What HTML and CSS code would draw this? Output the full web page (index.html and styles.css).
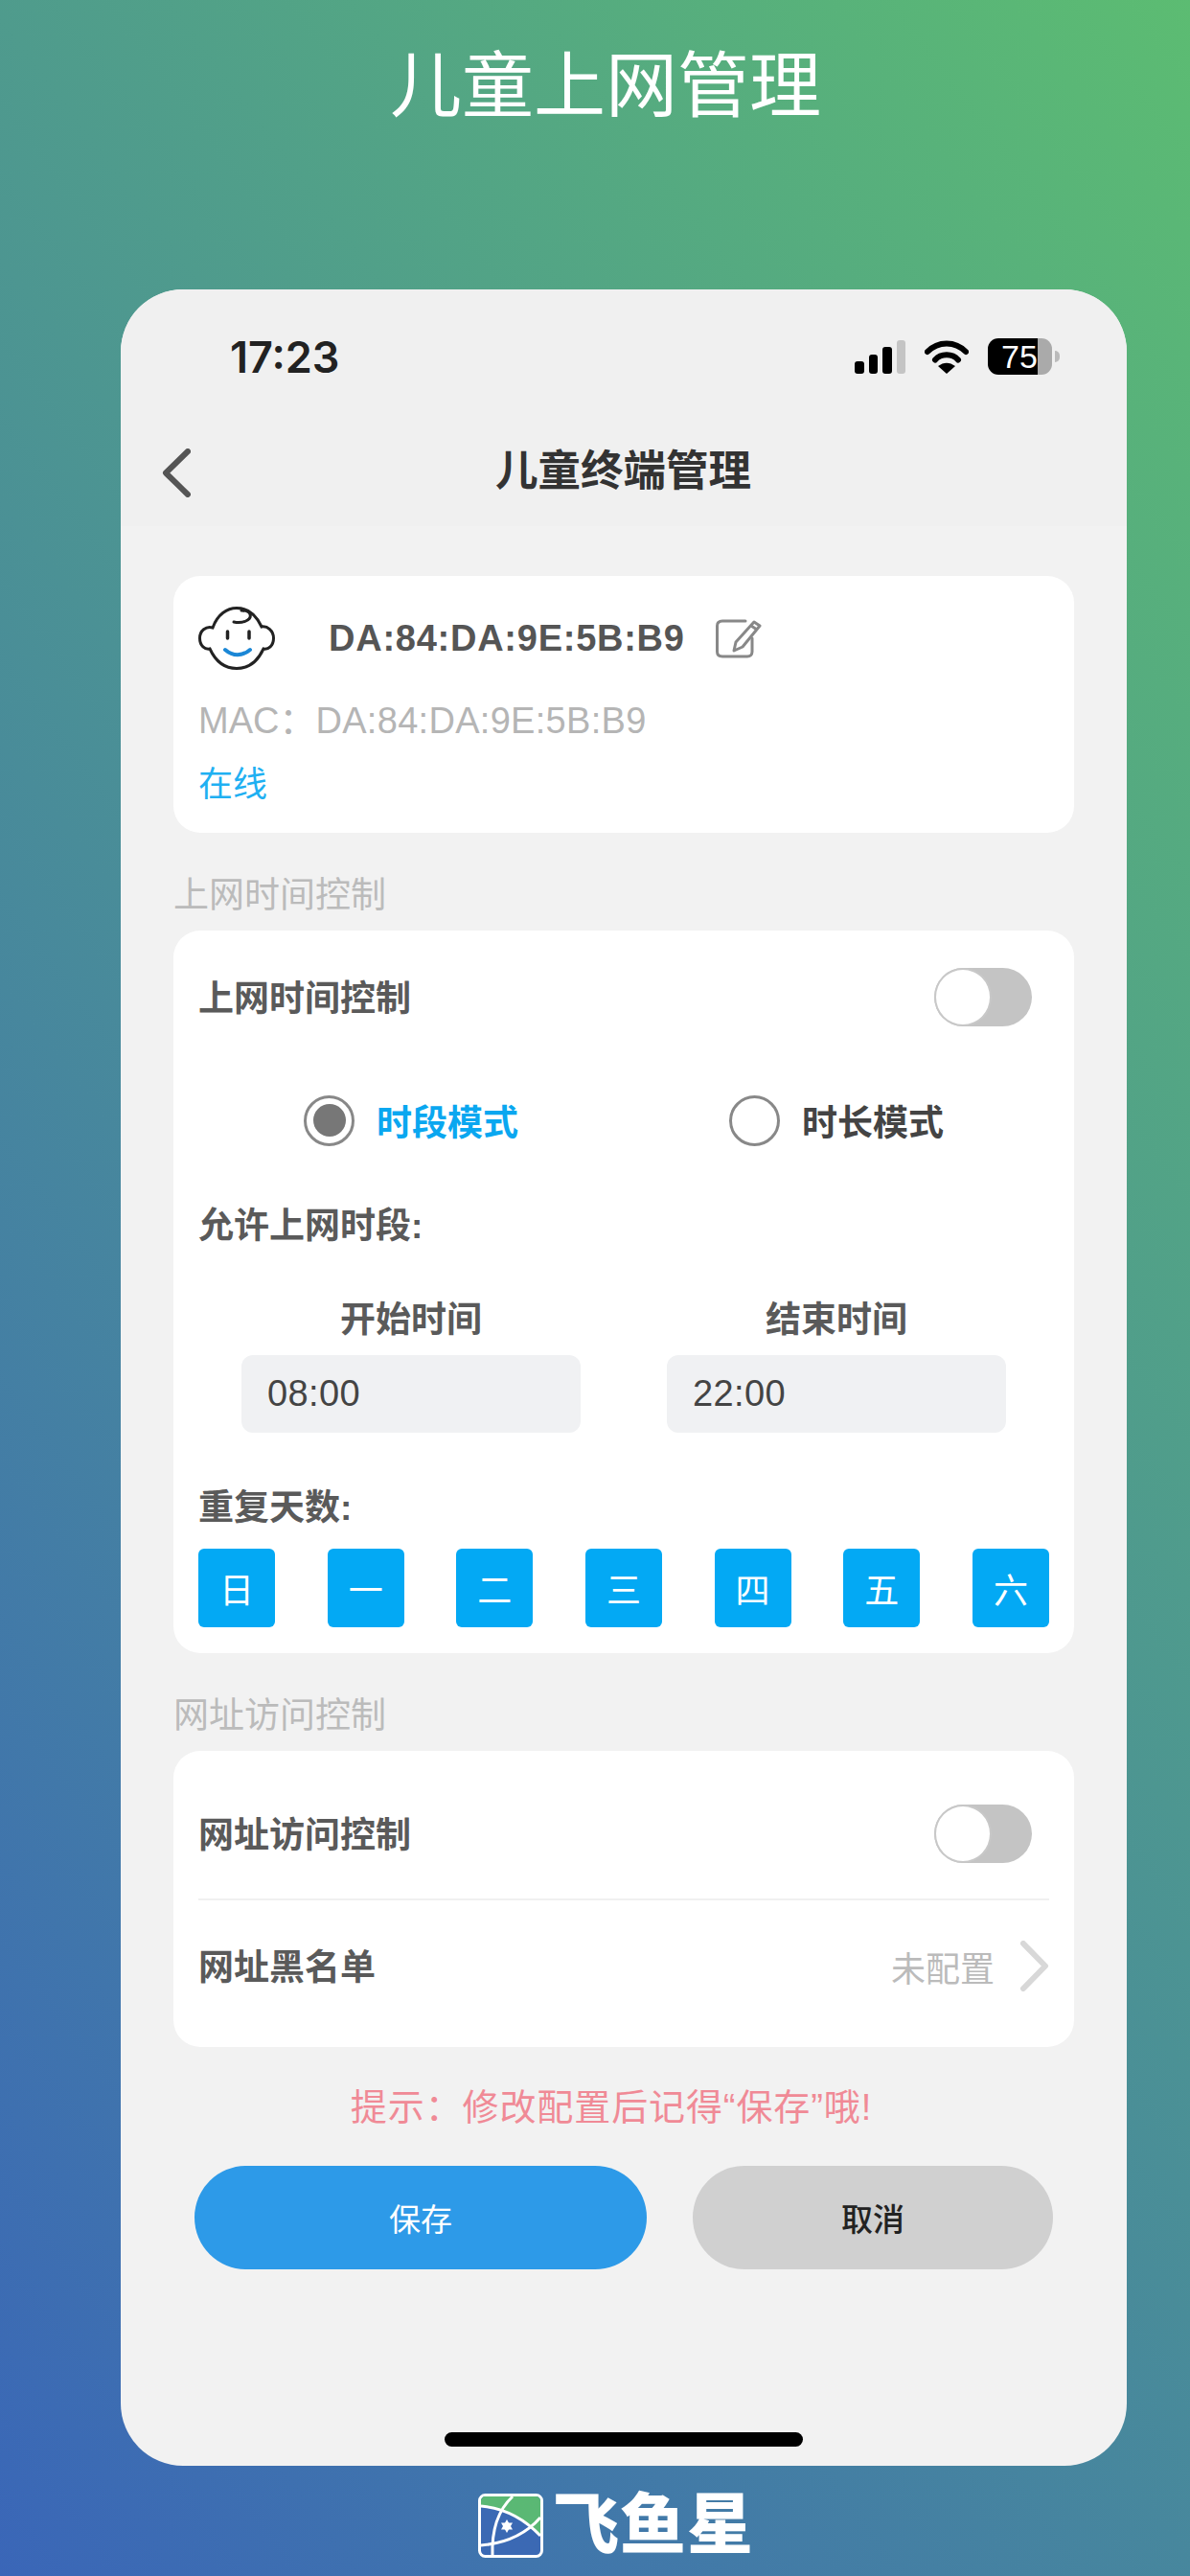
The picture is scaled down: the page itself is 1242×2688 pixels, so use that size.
FILE: index.html
```html
<!doctype html>
<html lang="zh-CN">
  <head>
    <meta charset="UTF-8" />
    <title>儿童上网管理</title>
    <link rel="stylesheet" href="styles.css">
  </head>

  <body>
    <h1 class="page-title">儿童上网管理</h1>

    <div class="phone">
      <div class="status-bar">
        <span class="clock">17:23</span>
        <div class="status-icons">
          <svg width="53" height="35" viewBox="0 0 53 35">
            <rect x="0" y="22" width="10" height="13" rx="3" fill="#000" />
            <rect x="15" y="15" width="9" height="20" rx="3" fill="#000" />
            <rect x="29" y="7" width="10" height="28" rx="3" fill="#000" />
            <rect x="44" y="0" width="9" height="35" rx="3" fill="#c4c4c4" />
          </svg>
          <svg width="46" height="35" viewBox="0 0 46 35">
            <path d="M3 12 C14 0.500 32 0.500 43 12" fill="none" stroke="#000" stroke-width="6" stroke-linecap="round" />
            <path d="M11 20.500 C17 13.500 29 13.500 35 20.500" fill="none" stroke="#000" stroke-width="6" stroke-linecap="round" />
            <path d="M14 27 C20 22.500 26 22.500 32 27 L23 35 Z" fill="#000" />
          </svg>
          <div class="battery-wrap">
            <div class="battery">75</div>
            <span class="battery-nub"></span>
          </div>
        </div>
      </div>

      <div class="nav">
        <svg class="back" width="30" height="51" viewBox="0 0 30 51">
          <path d="M27 3 L4 25.5 L27 48" fill="none" stroke="#555" stroke-width="6" stroke-linecap="round" stroke-linejoin="round" />
        </svg>
        <div class="nav-title">儿童终端管理</div>
      </div>

      <div class="content">
        <div class="card device-card">
          <div class="device-row">
            <svg width="80" height="66" viewBox="0 0 80 66">
              <path d="M15 22 C20 8 30 1.500 40 1.500 C52 1.500 60 8 66 21 C72 20 78.500 25 78.500 33 C78.500 41 73 45 68 44 C62 57 52 64.500 40 64.500 C28 64.500 18 57 12 44 C7 45 1.500 41 1.500 33 C1.500 25 8 20 15 22 Z" fill="none" stroke="#222" stroke-width="3" />
              <path d="M37 16 C46 18 56 14 54 8 C53 5 49 4 45 4" fill="none" stroke="#222" stroke-width="3" stroke-linecap="round" />
              <path d="M30.500 26 V33 M53 26 V33" fill="none" stroke="#222" stroke-width="3.500" stroke-linecap="round" />
              <path d="M28 45 C36 52 46 52 54 45" fill="none" stroke="#1b87d6" stroke-width="4" stroke-linecap="round" />
            </svg>
            <span class="device-name">DA:84:DA:9E:5B:B9</span>
            <svg class="edit" width="48" height="41" viewBox="0 0 48 41">
              <path d="M31 2 H7 C3.500 2 1.500 4 1.500 7 V34 C1.500 37 3.500 39 7 39 H33 C36 39 38 37 38 34 V20" fill="none" stroke="#888" stroke-width="3" stroke-linecap="round" />
              <path d="M40 3 L46 7 L28 29 L19 33 L21 24 Z" fill="none" stroke="#888" stroke-width="3" stroke-linejoin="round" />
              <path d="M37 7 L43 11" fill="none" stroke="#888" stroke-width="3" />
            </svg>
          </div>
          <div class="mac">MAC：<span class="mac-value">DA:84:DA:9E:5B:B9</span></div>
          <div class="online">在线</div>
        </div>

        <div class="section-title">上网时间控制</div>
        <div class="card time-card">
          <div class="switch-row">
            <span class="label">上网时间控制</span>
            <span class="toggle"><span class="thumb"></span></span>
          </div>

          <div class="two-col modes">
            <div class="mode">
              <span class="radio checked"><span class="radio-dot"></span></span>
              <span class="mode-text active">时段模式</span>
            </div>
            <div class="mode">
              <span class="radio"></span>
              <span class="mode-text">时长模式</span>
            </div>
          </div>

          <div class="label sub-label">允许上网时段:</div>

          <div class="two-col times">
            <div class="time-col">
              <div class="label">开始时间</div>
              <div class="time-input">08:00</div>
            </div>
            <div class="time-col">
              <div class="label">结束时间</div>
              <div class="time-input">22:00</div>
            </div>
          </div>

          <div class="label repeat-label">重复天数:</div>
          <div class="days">
            <span class="day">日</span>
            <span class="day">一</span>
            <span class="day">二</span>
            <span class="day">三</span>
            <span class="day">四</span>
            <span class="day">五</span>
            <span class="day">六</span>
          </div>
        </div>

        <div class="section-title">网址访问控制</div>
        <div class="card url-card">
          <div class="switch-row">
            <span class="label">网址访问控制</span>
            <span class="toggle"><span class="thumb"></span></span>
          </div>
          <div class="divider"></div>
          <div class="blacklist-row">
            <span class="label">网址黑名单</span>
            <div class="blacklist-right">
              <span class="not-set">未配置</span>
              <svg width="31" height="53" viewBox="0 0 31 53">
                <path d="M4 3 L27 26.500 L4 50" fill="none" stroke="#d8d8d8" stroke-width="6" stroke-linecap="round" stroke-linejoin="round" />
              </svg>
            </div>
          </div>
        </div>

        <div class="tip">提示：修改配置后记得“保存”哦!</div>

        <div class="actions">
          <button type="button" class="btn save">保存</button>
          <button type="button" class="btn cancel">取消</button>
        </div>
      </div>

      <div class="home-bar"></div>
    </div>

    <div class="brand">
      <svg width="68" height="67" viewBox="0 0 68 67">
        <rect x="1.500" y="1.500" width="65" height="64" rx="6" fill="#3b69b4" stroke="#fff" stroke-width="3" />
        <path d="M3 13 C26 15 46 24 65 44 V8 C65 5 63 3 60 3 H8 C5 3 3 5 3 8 Z" fill="#5ab874" />
        <path d="M3 13 C26 15 46 24 65 44" fill="none" stroke="#fff" stroke-width="3" />
        <path d="M36 3 C20 18 14 40 15 65" fill="none" stroke="#fff" stroke-width="3" />
        <path d="M3 54 C28 52 50 42 65 25" fill="none" stroke="#fff" stroke-width="3" />
        <polygon points="30,27 36,37.500 24,37.500" fill="#fff" />
        <polygon points="30,41 36,30.500 24,30.500" fill="#fff" />
      </svg>
      <span class="brand-name">飞鱼星</span>
    </div>
  </body>
</html>
```

FILE: styles.css
```css
* {
  margin: 0;
  padding: 0;
  box-sizing: border-box;
  font-family: 'Liberation Sans', 'Noto Sans CJK SC', sans-serif;
}

body {
  width: 1242px;
  height: 2688px;
  overflow: hidden;
  background: linear-gradient(53deg, #3a66b8, #5cbc72);
  display: flex;
  flex-direction: column;
}

.page-title {
  height: 302px;
  padding: 42px 0 0 22px;
  color: #fff;
  font-size: 75px;
  font-weight: 400;
  line-height: 96px;
  text-align: center;
}

.phone {
  width: 1050px;
  height: 2271px;
  margin-left: 126px;
  background-color: #f2f2f2;
  border-radius: 65px;
  display: flex;
  flex-direction: column;
  overflow: hidden;
}

.status-bar {
  height: 140px;
  padding: 0 70px 0 114px;
  background-color: #f0f0f0;
  display: flex;
  justify-content: space-between;
  align-items: center;
}

.clock {
  color: #222;
  font-family: 'Inter', sans-serif;
  font-size: 45px;
  font-weight: 600;
}

.status-icons {
  display: flex;
  align-items: center;
  gap: 20px;
}

.battery-wrap {
  display: flex;
  align-items: center;
  gap: 3px;
}

.battery {
  width: 67px;
  height: 38px;
  padding-left: 14px;
  border-radius: 11px;
  background: linear-gradient(90deg, #000 77%, #aaa 77%);
  color: #fff;
  font-size: 34px;
  line-height: 38px;
  overflow: hidden;
  white-space: nowrap;
}

.battery-nub {
  width: 5px;
  height: 12px;
  border-radius: 0 5px 5px 0;
  background-color: #bbb;
}

.nav {
  height: 107px;
  padding: 0 0 17px 43px;
  background-color: #f0f0f0;
  display: grid;
  grid-template-columns: 1fr auto 1fr;
  align-items: center;
}

.back {
  margin-top: 12px;
}

.nav-title {
  color: #333;
  font-size: 44.5px;
  font-weight: 700;
  transform: translateX(-22px);
}

.content {
  padding: 52px 55px 0;
}

.card {
  background-color: #fff;
  border-radius: 28px;
  padding-left: 26px;
  padding-right: 26px;
}

.device-card {
  padding-top: 32px;
  padding-bottom: 26px;
}

.device-row {
  display: flex;
  align-items: center;
}

.device-name {
  margin-left: 56px;
  color: #555;
  font-size: 38px;
  font-weight: 700;
  letter-spacing: 0.75px;
}

.edit {
  margin-left: 32px;
}

.mac {
  margin-top: 27px;
  color: #b5b5b5;
  font-size: 38px;
  line-height: 52px;
}

.mac-value {
  letter-spacing: 0.3px;
}

.online {
  margin-top: 15px;
  margin-bottom: -2px;
  color: #1fb0f2;
  font-size: 36px;
  line-height: 52px;
}

.section-title {
  margin: 37px 0 15px;
  height: 50px;
  color: #bbb;
  font-size: 37px;
  line-height: 58px;
}

.time-card {
  padding-top: 39px;
  padding-bottom: 27px;
}

.url-card {
  padding-top: 56px;
  padding-bottom: 58px;
}

.label {
  height: 50px;
  color: #5a5a5a;
  font-size: 37px;
  font-weight: 700;
  line-height: 53px;
}

.switch-row {
  height: 61px;
  padding-right: 18px;
  display: flex;
  justify-content: space-between;
  align-items: center;
}

.toggle {
  width: 102px;
  height: 61px;
  border-radius: 31px;
  background-color: #c4c4c4;
  display: block;
}

.thumb {
  display: block;
  width: 60px;
  height: 61px;
  border-radius: 50%;
  background-color: #fff;
  border: 2px solid #c8c8c8;
}

.two-col {
  display: grid;
  grid-template-columns: 1fr 1fr;
}

.modes {
  margin-top: 71px;
}

.mode {
  display: flex;
  justify-content: center;
  align-items: center;
  gap: 23px;
}

.radio {
  width: 53px;
  height: 53px;
  border: 3px solid #888;
  border-radius: 50%;
  display: flex;
  justify-content: center;
  align-items: center;
}

.radio-dot {
  width: 34px;
  height: 34px;
  border-radius: 50%;
  background-color: #777;
}

.mode-text {
  color: #444;
  font-size: 37px;
  font-weight: 700;
}

.mode-text.active {
  color: #0aa7f0;
}

.sub-label {
  margin-top: 57px;
}

.times {
  margin-top: 48px;
}

.time-col {
  display: flex;
  flex-direction: column;
  align-items: center;
  gap: 13px;
}

.time-input {
  width: 354px;
  height: 81px;
  padding-left: 27px;
  border-radius: 12px;
  background-color: #f0f1f3;
  color: #444;
  font-size: 38px;
  letter-spacing: 0.4px;
  line-height: 81px;
}

.repeat-label {
  margin-top: 52px;
}

.days {
  margin-top: 19px;
  display: flex;
  justify-content: space-between;
}

.day {
  width: 80px;
  height: 82px;
  border-radius: 6px;
  background-color: #03a9f4;
  color: #fff;
  font-size: 36px;
  display: flex;
  justify-content: center;
  align-items: center;
}

.divider {
  height: 2px;
  margin: 37px 0 42px;
  background-color: #f0f0f0;
}

.blacklist-row {
  height: 53px;
  display: flex;
  justify-content: space-between;
  align-items: center;
}

.blacklist-right {
  display: flex;
  align-items: center;
  gap: 26px;
}

.not-set {
  color: #bbb;
  font-size: 36px;
}

.tip {
  margin-top: 38px;
  padding-right: 26px;
  color: #f08a96;
  font-size: 38px;
  letter-spacing: 0.9px;
  line-height: 50px;
  text-align: center;
  white-space: nowrap;
}

.actions {
  margin-top: 36px;
  padding: 0 22px;
  display: flex;
  gap: 48px;
}

.btn {
  height: 108px;
  border: none;
  border-radius: 54px;
  font-size: 33px;
}

.btn.save {
  width: 472px;
  background-color: #2d9ae8;
  color: #fff;
}

.btn.cancel {
  width: 376px;
  background-color: #d0d0d0;
  color: #222;
  font-weight: 500;
}

.home-bar {
  width: 374px;
  height: 15px;
  margin-top: auto;
  margin-bottom: 20px;
  align-self: center;
  border-radius: 8px;
  background-color: #000;
}

.brand {
  margin-top: 29px;
  padding-left: 499px;
  display: flex;
  align-items: center;
  gap: 10px;
}

.brand-name {
  color: #fff;
  font-size: 69px;
  font-weight: 900;
  letter-spacing: 1px;
  line-height: 67px;
}
```
